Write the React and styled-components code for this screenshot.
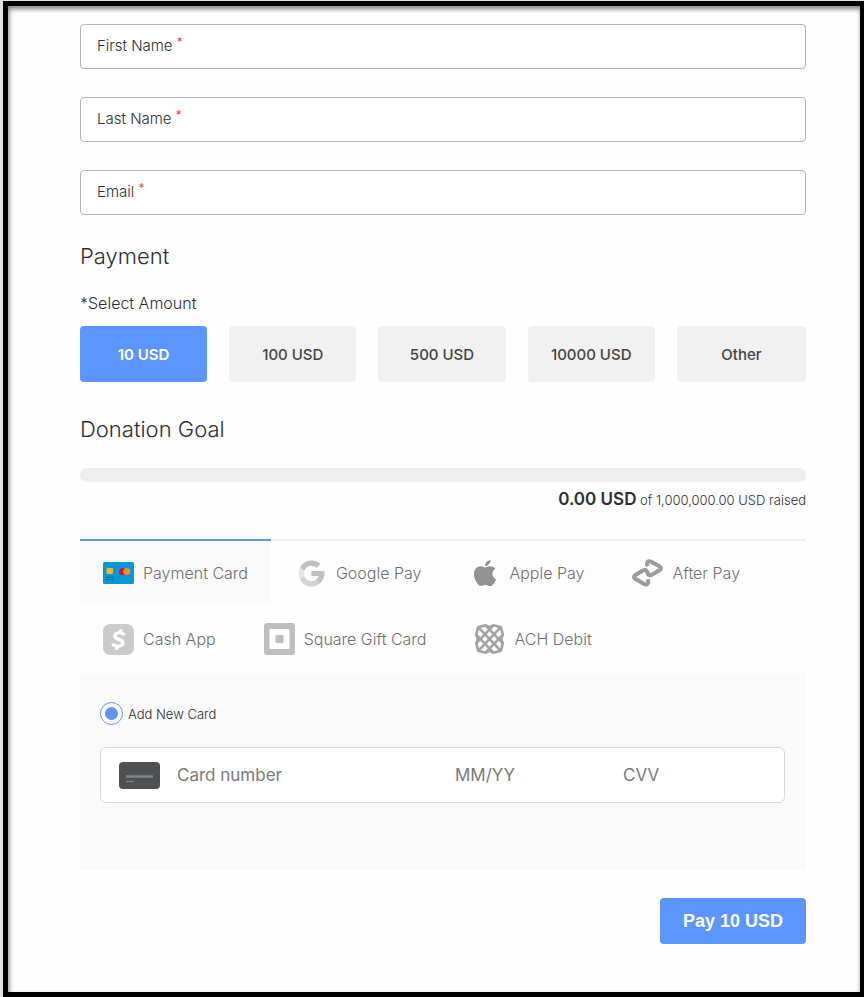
import React, { useState } from 'react';
import styled, { createGlobalStyle } from 'styled-components';
import { FcGoogle } from 'react-icons/fc';
import { FaApple } from 'react-icons/fa';
import { SiCashapp } from 'react-icons/si';

const fields = [
    { id: 'firstName', label: 'First Name', type: 'text' },
    { id: 'lastName', label: 'Last Name', type: 'text' },
    { id: 'email', label: 'Email', type: 'email' },
];

const amounts = ['10 USD', '100 USD', '500 USD', '10000 USD', 'Other'];

const CardIcon = () => (
    <svg width="31" height="22" viewBox="0 0 31 22">
        <rect width="31" height="22" rx="1.5" fill="#0a97d9" />
        <rect x="3.5" y="6" width="6.5" height="6" rx="1" fill="#f0b52b" />
        <path d="M3 15.2h8M3 17.7h8" stroke="#14648f" strokeWidth="1" />
        <circle cx="19.5" cy="9.5" r="3.5" fill="#d5173a" />
        <circle cx="23.8" cy="9.5" r="3.5" fill="#f0952b" />
    </svg>
);

const AfterPayIcon = () => (
    <svg width="31" height="28" viewBox="0 0 31 28" fill="none" stroke="#9b9b9b" strokeWidth="4" strokeLinejoin="round">
        <path d="M15.800 7.200L15 5.500Q14.800 1.200 18.800 2.600L27.800 7.600Q30.200 9.300 27.800 11L19.500 15.900Q16.600 17.200 15.800 14.500L15 12.500Q13.800 10 11 11.400L3.200 16.200Q.8 18 3.200 19.700L12.200 25Q16.200 26.600 16.300 22.800L15.600 20.300" />
    </svg>
);

const SquareIcon = () => (
    <svg width="31" height="32" viewBox="0 0 31 32">
        <rect width="31" height="32" rx="3" fill="#bebebe" />
        <rect x="5.500" y="6" width="20" height="20" rx="1" fill="#fff" />
        <rect x="11.500" y="12" width="8" height="8" rx="1" fill="#bebebe" />
    </svg>
);

const AchIcon = () => (
    <svg width="31" height="32" viewBox="0 0 31 32" fill="none" stroke="#a3a3a3" strokeWidth="2.600" strokeLinejoin="round">
        <path d="M4.200 4.200L11.500 2.300L15.500 4.200L19.500 2.300L26.800 4.200L28.800 11.700L27 16L28.800 20.300L26.800 27.800L19.500 29.700L15.500 27.800L11.500 29.700L4.200 27.800L2.200 20.300L4 16L2.200 11.700Z" />
        <path d="M4.200 4.200L26.800 27.800M26.800 4.200L4.200 27.800M11.500 2.300L28.800 20.300M19.500 2.300L2.200 20.300M2.200 11.700L19.500 29.700M28.800 11.700L11.500 29.700" />
    </svg>
);

const BlankCardIcon = () => (
    <svg width="41" height="27" viewBox="0 0 41 27">
        <rect width="41" height="27" rx="4" fill="#4f5051" />
        <path d="M7 14.500h27" stroke="#828384" strokeWidth="2.500" />
        <path d="M7 19.500h8" stroke="#828384" strokeWidth="1.200" />
    </svg>
);

const methods = [
    { id: 'card', name: 'Payment Card', icon: <CardIcon /> },
    { id: 'google', name: 'Google Pay', icon: <GoogleMark /> },
    { id: 'apple', name: 'Apple Pay', icon: <FaApple size={30} color="#929292" /> },
    { id: 'after', name: 'After Pay', icon: <AfterPayIcon /> },
    { id: 'cash', name: 'Cash App', icon: <SiCashapp size={31} color="#cbcbcb" /> },
    { id: 'gift', name: 'Square Gift Card', icon: <SquareIcon /> },
    { id: 'ach', name: 'ACH Debit', icon: <AchIcon /> },
];

function GoogleMark() {
    return <GrayIcon><FcGoogle size={31} /></GrayIcon>;
}

const App = () => {
    const [amount, setAmount] = useState('10 USD');
    const [method, setMethod] = useState('card');

    return (
        <>
            <GlobalStyle />
            <Frame>
                <Form onSubmit={(e) => e.preventDefault()}>
                    <Fields>
                        {fields.map((f) => (
                            <Field key={f.id}>
                                <FieldLabel htmlFor={f.id}>{f.label} <Required>*</Required></FieldLabel>
                                <FieldInput id={f.id} type={f.type} required />
                            </Field>
                        ))}
                    </Fields>

                    <Title>Payment</Title>
                    <AmountLabel id="amountLabel">*Select Amount</AmountLabel>
                    <Amounts role="group" aria-labelledby="amountLabel">
                        {amounts.map((a) => (
                            <AmountBtn key={a} type="button" $active={a === amount} aria-pressed={a === amount} onClick={() => setAmount(a)}>
                                {a}
                            </AmountBtn>
                        ))}
                    </Amounts>

                    <Title>Donation Goal</Title>
                    <GoalBar role="progressbar" aria-label="Donation Goal" aria-valuenow={0} aria-valuemin={0} aria-valuemax={1000000} />
                    <GoalText><strong>0.00 USD</strong> of 1,000,000.00 USD raised</GoalText>

                    <Tabs role="tablist">
                        {methods.map((m) => (
                            <Tab key={m.id} type="button" role="tab" $active={m.id === method} aria-selected={m.id === method} onClick={() => setMethod(m.id)}>
                                <TabIcon>{m.icon}</TabIcon>
                                {m.name}
                            </Tab>
                        ))}
                    </Tabs>

                    <Panel>
                        <RadioLabel>
                            <Radio type="radio" name="savedCard" defaultChecked />
                            Add New Card
                        </RadioLabel>
                        <CardBox>
                            <BlankCardIcon />
                            <CardInput $grow={278} aria-label="Card number" placeholder="Card number" />
                            <CardInput $grow={168} aria-label="Expiry date" placeholder="MM/YY" />
                            <CardInput $grow={161} aria-label="CVV" placeholder="CVV" />
                        </CardBox>
                    </Panel>

                    <PayBtn type="submit">Pay {amount}</PayBtn>
                </Form>
            </Frame>
        </>
    );
};

const GlobalStyle = createGlobalStyle`
* {
  box-sizing: border-box;
}
body {
  margin: 0;
  background-color: #e2e2e2;
  color: #2b2f33;
  font-family: Inter, "Liberation Sans", sans-serif;
  font-weight: 300;
}
button, input {
  font-family: inherit;
}
`;

const Frame = styled.main`
min-height: calc(100vh - 1px);
margin: 1px 0 0 3px;
padding: 18px 54px 48px 72px;
border: 5px solid #000;
border-right-width: 4px;
background-color: #fefefe;
box-shadow: inset 1px 3px 5px rgba(0, 0, 0, 0.5);
`;

const Form = styled.form`
display: flex;
flex-direction: column;
`;

const Fields = styled.div`
display: flex;
flex-direction: column;
gap: 28px;
`;

const Field = styled.div`
display: flex;
align-items: center;
height: 45px;
padding: 0 16px 1px;
border: 1px solid #b3b3b3;
border-radius: 4px;
background-color: #fff;
`;

const FieldLabel = styled.label`
font-size: 15px;
line-height: 20px;
`;

const Required = styled.span`
color: #e02020;
font-size: 12px;
line-height: 0;
vertical-align: 5px;
`;

const FieldInput = styled.input`
flex: 1;
min-width: 0;
height: 100%;
border: 0;
outline: none;
background: transparent;
font-size: 15px;
`;

const Title = styled.h2`
margin: 24px 0 0;
font-size: 22px;
font-weight: 300;
line-height: 34px;
`;

const AmountLabel = styled.div`
margin: 20px 0 13px;
font-size: 16px;
line-height: 20px;
`;

const Amounts = styled.div`
display: grid;
grid-template-columns: repeat(4, 127fr) 129fr;
gap: 22px;
margin-bottom: 6px;
`;

const AmountBtn = styled.button`
height: 56px;
border: 0;
border-radius: 4px;
background-color: ${(props) => (props.$active ? '#5c95ff' : '#f1f1f1')};
color: ${(props) => (props.$active ? '#fff' : '#444')};
font-size: 15px;
font-weight: ${(props) => (props.$active ? 600 : 500)};
cursor: pointer;
`;

const GoalBar = styled.div`
height: 14px;
margin-top: 22px;
border-radius: 7px;
background-color: #eee;
`;

const GoalText = styled.p`
margin: 5px 0 0;
font-size: 13px;
line-height: 24px;
text-align: right;
strong {
  font-size: 17px;
  font-weight: 600;
}
`;

const Tabs = styled.div`
display: flex;
flex-wrap: wrap;
column-gap: 2px;
margin-top: 27px;
padding-bottom: 2px;
box-shadow: inset 0 2px #eee;
`;

const Tab = styled.button`
display: flex;
align-items: center;
gap: 9px;
height: 66px;
padding: 0 23px;
border: 0;
border-top: 2px solid ${(props) => (props.$active ? '#6795dc' : 'transparent')};
background-color: ${(props) => (props.$active ? '#fafafa' : 'transparent')};
background-clip: padding-box;
color: #6f6f6f;
font-size: 16px;
font-weight: 300;
cursor: pointer;
`;

const TabIcon = styled.span`
display: flex;
justify-content: center;
width: 31px;
`;

const GrayIcon = styled.span`
display: flex;
filter: grayscale(1) opacity(0.4);
`;

const Panel = styled.section`
min-height: 197px;
padding: 29px 21px 20px 20px;
background-color: #fafafa;
`;

const RadioLabel = styled.label`
display: flex;
align-items: center;
gap: 5px;
font-size: 13px;
`;

const Radio = styled.input`
appearance: none;
display: grid;
place-items: center;
width: 23px;
height: 23px;
margin: 0;
border: 1px solid #5c95ff;
border-radius: 50%;
background-color: #fff;
&:checked::before {
  content: "";
  width: 13px;
  height: 13px;
  border-radius: 50%;
  background-color: #5c95ff;
}
`;

const CardBox = styled.div`
display: flex;
align-items: center;
height: 56px;
margin-top: 22px;
padding-left: 18px;
border: 1px solid #d8d8d8;
border-radius: 6px;
background-color: #fff;
svg {
  flex: none;
  margin-right: 17px;
}
`;

const CardInput = styled.input`
flex: ${(props) => props.$grow} 1 0;
min-width: 0;
height: 100%;
padding: 0;
border: 0;
outline: none;
background: transparent;
color: #333;
font-size: 17px;
&::placeholder {
  color: #7b7b7b;
}
`;

const PayBtn = styled.button`
align-self: flex-end;
height: 46px;
margin-top: 28px;
padding: 0 23px;
border: 0;
border-radius: 4px;
background-color: #5c95ff;
color: #fff;
font-family: "Liberation Sans", Arial, sans-serif;
font-size: 18px;
font-weight: 700;
cursor: pointer;
`;

export default App;
